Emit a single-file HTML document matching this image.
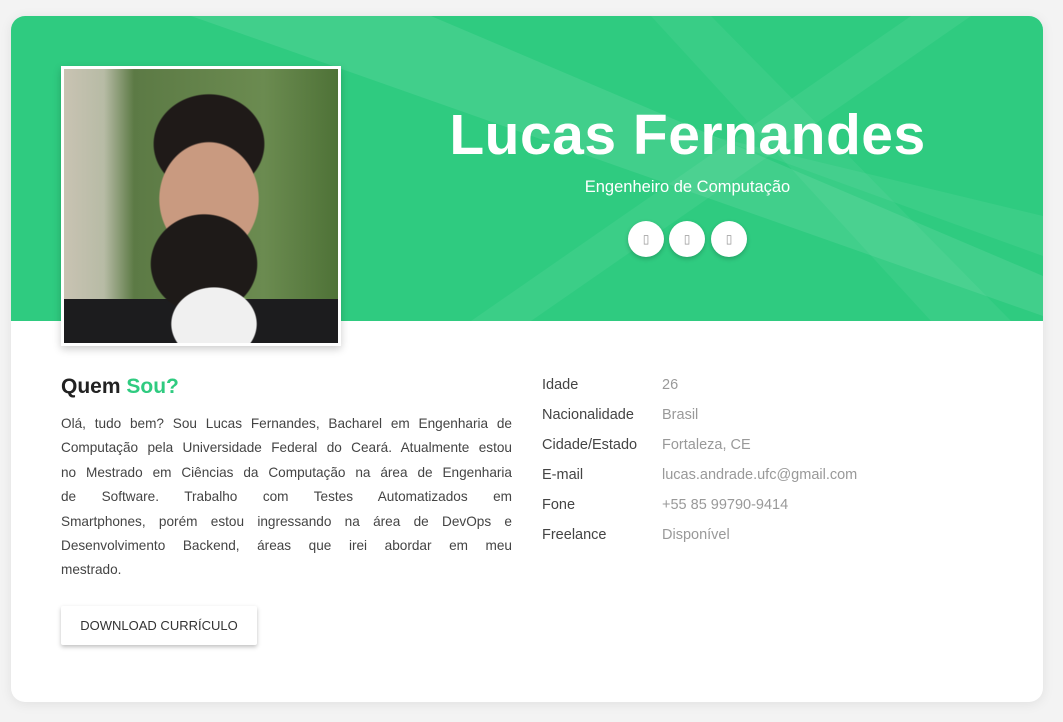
<!DOCTYPE html>
<html><head><meta charset="utf-8"><style>
*{margin:0;padding:0;box-sizing:border-box}
body{width:1063px;height:722px;background:#f3f3f3;font-family:"Liberation Sans",sans-serif;position:relative;overflow:hidden}
.card{position:absolute;left:11px;top:16px;width:1032px;height:686px;background:#fff;border-radius:14px;overflow:hidden;box-shadow:0 2px 12px rgba(0,0,0,.08)}
.hdr{position:absolute;left:0;top:0;width:1032px;height:305px;background:#2fcb80;overflow:hidden}
.photo{position:absolute;left:50px;top:50px;width:280px;height:280px;border:3px solid #fff;box-shadow:0 3px 8px rgba(0,0,0,.2);overflow:hidden;
background:radial-gradient(ellipse 70px 60px at 150px 255px,#f0f0f0 60%,transparent 62%),
radial-gradient(ellipse 75px 70px at 140px 195px,#1e1a18 70%,transparent 72%),
radial-gradient(ellipse 70px 80px at 145px 130px,#c99a80 70%,transparent 72%),
radial-gradient(ellipse 78px 70px at 145px 75px,#1f1a18 70%,transparent 72%),
linear-gradient(180deg,transparent 230px,#1c1c1e 230px),
linear-gradient(90deg,#c9c3b3 0,#b7bba5 40px,#5c7a45 70px,#6b8b50 200px,#4c7035 280px)}
h1{position:absolute;left:380px;width:593px;top:86px;text-align:center;color:#fff;font-size:57px;font-weight:bold;letter-spacing:.5px}
.sub{position:absolute;left:380px;width:593px;top:162px;text-align:center;color:#fff;font-size:16.5px}
.ic{position:absolute;top:205px;width:36px;height:36px;border-radius:50%;background:#fff;box-shadow:0 2px 5px rgba(0,0,0,.2);color:#999;font-size:12px;text-align:center;line-height:36px}
h2{position:absolute;left:50px;top:359px;font-size:21px;font-weight:bold;color:#222}
h2 span{color:#2fcb80}
.p{position:absolute;left:50px;top:396px;width:451px;font-size:13.6px;line-height:24.4px;color:#444}
.p div{text-align:justify;text-align-last:justify;white-space:nowrap}
.p div.l{text-align-last:left}
.btn{position:absolute;left:50px;top:590px;width:196px;height:39px;background:#fff;box-shadow:0 2px 4px rgba(0,0,0,.25);border-radius:2px;font-size:13px;color:#333;text-align:center;line-height:39px}
.t{position:absolute;left:531px;top:354px;font-size:14.5px;line-height:30px}
.t td:first-child{color:#444;width:120px}
.t td{color:#999;padding:0}
</style></head><body>
<div class="card">
<div class="hdr">
<svg width="1032" height="305" style="position:absolute;left:0;top:0">
<polygon points="180,0 420,0 1032,260 1032,300" fill="rgba(255,255,255,.09)"/>
<polygon points="460,305 520,305 960,0 900,0" fill="rgba(255,255,255,.06)"/>
<polygon points="640,0 700,0 1000,305 920,305" fill="rgba(255,255,255,.05)"/>
<polygon points="700,120 1032,200 1032,240" fill="rgba(255,255,255,.06)"/>
</svg>
<h1>Lucas Fernandes</h1>
<div class="sub">Engenheiro de Computação</div>
<div class="ic" style="left:617px">▯</div>
<div class="ic" style="left:658px">▯</div>
<div class="ic" style="left:700px">▯</div>
</div>
<div class="photo"></div>
<h2>Quem <span>Sou?</span></h2>
<div class="p">
<div>Olá, tudo bem? Sou Lucas Fernandes, Bacharel em Engenharia de</div>
<div>Computação pela Universidade Federal do Ceará. Atualmente estou</div>
<div>no Mestrado em Ciências da Computação na área de Engenharia</div>
<div>de Software. Trabalho com Testes Automatizados em</div>
<div>Smartphones, porém estou ingressando na área de DevOps e</div>
<div>Desenvolvimento Backend, áreas que irei abordar em meu</div>
<div class="l">mestrado.</div>
</div>
<div class="btn">DOWNLOAD CURRÍCULO</div>
<table class="t" cellspacing="0">
<tr><td>Idade</td><td>26</td></tr>
<tr><td>Nacionalidade</td><td>Brasil</td></tr>
<tr><td>Cidade/Estado</td><td>Fortaleza, CE</td></tr>
<tr><td>E-mail</td><td>lucas.andrade.ufc@gmail.com</td></tr>
<tr><td>Fone</td><td>+55 85 99790-9414</td></tr>
<tr><td>Freelance</td><td>Disponível</td></tr>
</table>
</div>
</body></html>
